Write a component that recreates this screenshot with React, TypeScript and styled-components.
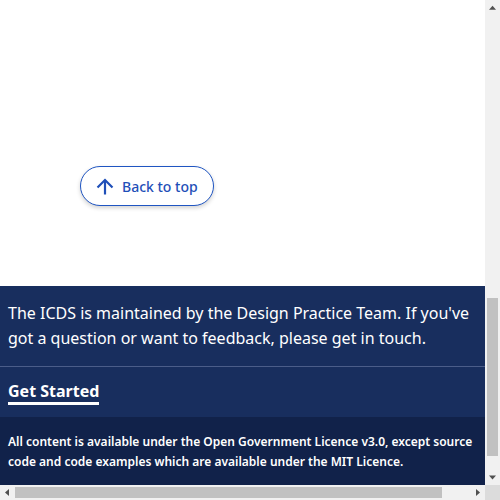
import React, { useLayoutEffect, useRef, useState } from "react";
import styled, { createGlobalStyle } from "styled-components";

const Global = createGlobalStyle`
  html, body { margin: 0; padding: 0; background: #ffffff; overflow: hidden; }
  body { font-family: "Noto Sans", "Open Sans", sans-serif; }
`;

/* ---------- scroll area with classic scrollbars ---------- */

const Shell = styled.div`
  width: 500px;
  height: 500px;
  display: grid;
  grid-template-columns: 485px 15px;
  grid-template-rows: 485px 15px;
  background: #ffffff;
`;

const Viewport = styled.div`
  overflow: auto;
  scrollbar-width: none;
  &::-webkit-scrollbar {
    display: none;
  }
`;

const Bar = styled.div<{ $vertical?: boolean }>`
  display: flex;
  flex-direction: ${(p) => (p.$vertical ? "column" : "row")};
  background: #f1f1f1;
`;

const BarButton = styled.div`
  flex: 0 0 15px;
  width: 15px;
  height: 15px;
  display: flex;
  align-items: center;
  justify-content: center;
  color: #505050;
`;

const Track = styled.div<{ $vertical?: boolean }>`
  flex: 1 1 auto;
  display: flex;
  flex-direction: ${(p) => (p.$vertical ? "column" : "row")};
  padding: ${(p) => (p.$vertical ? "0 2px" : "2px 0")};
`;

const Thumb = styled.div`
  flex: 0 0 auto;
  background: #c1c1c1;
`;

const Corner = styled.div`
  background: #dcdcdc;
`;

type Dir = "up" | "down" | "left" | "right";
const ARROWS: Record<Dir, string> = {
  up: "4,9.7 7.5,5.7 11,9.7",
  down: "4,5.5 11,5.5 7.5,9.5",
  left: "5,7.5 9,4 9,11",
  right: "6,4 10,7.5 6,11",
};

const ScrollArrow = ({ dir }: { dir: Dir }) => (
  <svg width="15" height="15" viewBox="0 0 15 15" aria-hidden="true">
    <polygon points={ARROWS[dir]} fill="currentColor" />
  </svg>
);

/* ---------- page ---------- */

const Page = styled.div`
  width: 517px;
  display: flex;
  flex-direction: column;
`;

const Main = styled.main`
  box-sizing: border-box;
  min-height: 1155px;
  display: flex;
  flex-direction: column;
  justify-content: flex-end;
  align-items: flex-start;
  padding: 0 0 80px 80px;
`;

const BackToTop = styled.a`
  box-sizing: border-box;
  height: 40px;
  display: inline-flex;
  align-items: center;
  gap: 8px;
  padding: 0 15px 0 15px;
  border: 1px solid #1f55c2;
  border-radius: 20px;
  background: #ffffff;
  box-shadow: 0 2px 4px rgba(0, 0, 0, 0.18);
  color: #1f4fb8;
  font-size: 14px;
  font-weight: 500;
  text-decoration: none;
  cursor: pointer;
`;

const Footer = styled.footer`
  color: #ffffff;
`;

const Upper = styled.div`
  background: #182e5e;
`;

const Intro = styled.p`
  margin: 0;
  box-sizing: border-box;
  max-width: 485px;
  padding: 15px 8px 15px 8px;
  font-size: 16px;
  line-height: 25px;
  border-bottom: 1px solid #4b5d89;
`;

const Links = styled.div`
  padding: 13px 8px 12px 8px;
`;

const NavLink = styled.a`
  display: inline-block;
  color: #ffffff;
  font-size: 16px;
  font-weight: 700;
  line-height: 22px;
  text-decoration: none;
  border-bottom: 3px solid #ffffff;
`;

const Lower = styled.div`
  background: #11224a;
  padding: 15px 8px 56px 8px;
`;

const Licence = styled.p`
  margin: 0;
  max-width: 485px;
  font-size: 12px;
  font-weight: 600;
  line-height: 20px;
`;

const ArrowUp = () => (
  <svg width="18" height="17" viewBox="0 0 18 17" fill="none" aria-hidden="true">
    <path d="M9 16.5V2" stroke="currentColor" strokeWidth="2.2" />
    <path d="M1.5 9.5L9 2L16.5 9.5" stroke="currentColor" strokeWidth="2.2" />
  </svg>
);

const TRACK = 455;

export default function App() {
  const view = useRef<HTMLDivElement>(null);
  const [m, setM] = useState({
    top: 869,
    left: 0,
    sh: 1397,
    ch: 485,
    sw: 517,
    cw: 485,
  });

  useLayoutEffect(() => {
    const el = view.current;
    if (!el) return;
    const update = () => {
      setM({
        top: el.scrollTop,
        left: el.scrollLeft,
        sh: el.scrollHeight,
        ch: el.clientHeight,
        sw: el.scrollWidth,
        cw: el.clientWidth,
      });
    };
    el.scrollTop = 869;
    update();
    el.addEventListener("scroll", update);
    return () => el.removeEventListener("scroll", update);
  }, []);

  const vLen = Math.round((TRACK * m.ch) / m.sh);
  const vOff = Math.round((TRACK * m.top) / m.sh);
  const hLen = Math.round((TRACK * m.cw) / m.sw);
  const hOff = Math.round((TRACK * m.left) / m.sw);

  return (
    <Shell>
      <Global />
      <Viewport ref={view}>
        <Page>
          <Main>
            <BackToTop href="#top">
              <ArrowUp />
              Back to top
            </BackToTop>
          </Main>
          <Footer>
            <Upper>
              <Intro>
                The ICDS is maintained by the Design Practice Team. If you've
                got a question or want to feedback, please get in touch.
              </Intro>
              <Links>
                <NavLink href="#get-started">Get Started</NavLink>
              </Links>
            </Upper>
            <Lower>
              <Licence>
                All content is available under the Open Government Licence
                v3.0, except source code and code examples which are available
                under the MIT Licence.
              </Licence>
            </Lower>
          </Footer>
        </Page>
      </Viewport>
      <Bar $vertical>
        <BarButton>
          <ScrollArrow dir="up" />
        </BarButton>
        <Track $vertical>
          <Thumb style={{ marginTop: vOff, height: vLen }} />
        </Track>
        <BarButton>
          <ScrollArrow dir="down" />
        </BarButton>
      </Bar>
      <Bar>
        <BarButton>
          <ScrollArrow dir="left" />
        </BarButton>
        <Track>
          <Thumb style={{ marginLeft: hOff, width: hLen }} />
        </Track>
        <BarButton>
          <ScrollArrow dir="right" />
        </BarButton>
      </Bar>
      <Corner />
    </Shell>
  );
}
